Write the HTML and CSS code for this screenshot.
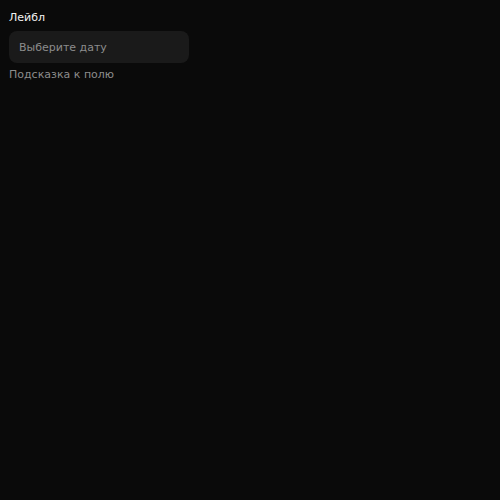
FILE: index.html
```html
<!DOCTYPE html>
<html lang="ru">
<head>
<meta charset="utf-8">
<link rel="stylesheet" href="styles.css">
</head>
<body>
<div class="field">
  <label class="label">Лейбл</label>
  <div class="input">Выберите дату</div>
  <div class="hint">Подсказка к полю</div>
</div>
</body>
</html>
```
FILE: styles.css
```css
html, body {
  margin: 0;
  background: #0a0a0a;
  height: 100%;
}
body {
  font-family: "DejaVu Sans", sans-serif;
  font-size: 11px;
  padding: 10px 9px;
  box-sizing: border-box;
}
.field {
  display: flex;
  flex-direction: column;
  width: 180px;
}
.label {
  color: #f2f2f2;
  line-height: 16px;
  margin-bottom: 5px;
}
.input {
  height: 32px;
  border-radius: 8px;
  background: #1a1a1a;
  color: #8c8c8c;
  display: flex;
  align-items: center;
  padding: 0 10px;
}
.hint {
  color: #8c8c8c;
  line-height: 16px;
  margin-top: 4px;
}
```
